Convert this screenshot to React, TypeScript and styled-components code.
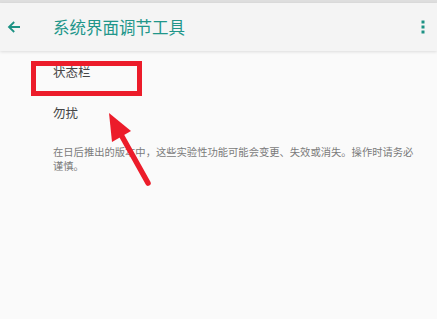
import React from "react";
import styled, { createGlobalStyle } from "styled-components";

const Global = createGlobalStyle`
  html, body {
    margin: 0;
    padding: 0;
    background: #fafafa;
    font-family: "Noto Sans CJK SC", "Noto Sans", sans-serif;
  }
`;

const Page = styled.div`
  position: relative;
  width: 437px;
  height: 319px;
  overflow: hidden;
  background: #fafafa;
`;

const StatusStrip = styled.div`
  height: 3px;
  background: #dedede;
`;

const Toolbar = styled.header`
  height: 48px;
  display: flex;
  align-items: center;
  background: #f4f4f4;
  box-shadow: 0 1px 3px rgba(0, 0, 0, 0.12);
  position: relative;
`;

const IconButton = styled.div`
  width: 28px;
  height: 48px;
  display: flex;
  align-items: center;
  justify-content: center;
  color: #1c9284;
`;

const Title = styled.h1`
  margin: 0 0 0 25px;
  flex: 1;
  font-size: 16.5px;
  font-weight: 400;
  color: #21968a;
  letter-spacing: 0;
`;

const Content = styled.main`
  padding: 0 0 0 53px;
`;

const Row = styled.div`
  height: 41px;
  display: flex;
  align-items: center;
  font-size: 12.5px;
  color: #454545;
`;

const Note = styled.p`
  margin: 12px 0 0;
  width: 368px;
  font-size: 10.3px;
  line-height: 14px;
  color: #7a7a7a;
`;

const Highlight = styled.div`
  position: absolute;
  left: 31px;
  top: 61px;
  width: 111px;
  height: 35px;
  box-sizing: border-box;
  border: 5px solid #ec1c2a;
`;

const Overlay = styled.svg`
  position: absolute;
  left: 0;
  top: 0;
  pointer-events: none;
`;

const App = () => (
  <Page>
    <Global />
    <StatusStrip />
    <Toolbar>
      <IconButton style={{ marginLeft: 0 }}>
        <svg width="14" height="14" viewBox="0 0 14 14">
          <path d="M13 7H2.5M7.2 2L2 7l5.2 5" fill="none" stroke="currentColor" strokeWidth="1.8" />
        </svg>
      </IconButton>
      <Title>系统界面调节工具</Title>
      <IconButton>
        <svg width="4" height="14" viewBox="0 0 4 14">
          <rect x="0.5" y="0.5" width="3" height="3" fill="currentColor" />
          <rect x="0.5" y="5.5" width="3" height="3" fill="currentColor" />
          <rect x="0.5" y="10.5" width="3" height="3" fill="currentColor" />
        </svg>
      </IconButton>
    </Toolbar>
    <Content>
      <Row>状态栏</Row>
      <Row>勿扰</Row>
      <Note>在日后推出的版本中，这些实验性功能可能会变更、失效或消失。操作时请务必谨慎。</Note>
    </Content>
    <Highlight />
    <Overlay width="437" height="319">
      <line x1="148" y1="183" x2="119" y2="131" stroke="#ec1c2a" strokeWidth="5.5" strokeLinecap="round" />
      <polygon points="109,113 131,131 112,142" fill="#ec1c2a" />
    </Overlay>
  </Page>
);

export default App;
